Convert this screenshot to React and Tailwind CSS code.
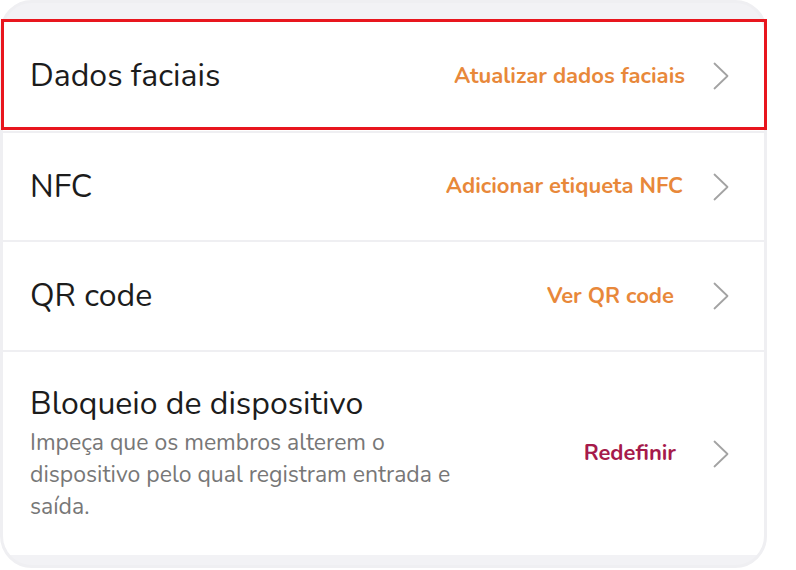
const font = { fontFamily: 'Nunito, Lato, "Noto Sans", sans-serif' }

function Chevron() {
    return (
        <svg width="16" height="28" viewBox="0 0 16 28" fill="none" className="shrink-0">
            <path d="M1.5 1.5 L14.5 14 L1.5 26.5" stroke="#a3a3a3" strokeWidth="1.8" strokeLinecap="round" strokeLinejoin="round" />
        </svg>
    )
}

function Row({ title, desc, action, actionColor, actionPad, height }) {
    return (
        <div className={`flex items-center bg-white pl-[27px] pr-[35px] ${height}`}>
            <div className="flex-1 min-w-0">
                <div className="text-[32px] leading-[40px] text-[#1c1c1c]">{title}</div>
                {desc && (
                    <div className="mt-[3px] max-w-[450px] text-[23px] leading-[32px] text-[#777777]">{desc}</div>
                )}
            </div>
            <div className={`flex items-center ${actionPad}`}>
                <span className={`text-[22px] font-bold ${actionColor}`}>{action}</span>
            </div>
            <div className="ml-[28px]">
                <Chevron />
            </div>
        </div>
    )
}

export default function App() {
    return (
        <div className="relative w-[796px] h-[570px] bg-white" style={font}>
            <div className="w-[767px] h-[568px] rounded-[32px] border-[3px] border-[#efeff2] overflow-hidden bg-[#f2f2f5] flex flex-col">
                <div className="h-[18px] shrink-0"></div>
                <div className="flex flex-col gap-[2px] bg-[#efeff2]">
                    <Row
                        title="Dados faciais"
                        action="Atualizar dados faciais"
                        actionColor="text-[#e8883a]"
                        actionPad="pr-0"
                        height="h-[110px]"
                    />
                    <Row
                        title="NFC"
                        action="Adicionar etiqueta NFC"
                        actionColor="text-[#e8883a]"
                        actionPad="pr-[2px]"
                        height="h-[107px]"
                    />
                    <Row
                        title="QR code"
                        action="Ver QR code"
                        actionColor="text-[#e8883a]"
                        actionPad="pr-[11px]"
                        height="h-[108px]"
                    />
                    <Row
                        title="Bloqueio de dispositivo"
                        desc="Impeça que os membros alterem o dispositivo pelo qual registram entrada e saída."
                        action="Redefinir"
                        actionColor="text-[#a61a4b]"
                        actionPad="pr-[9px]"
                        height="h-[203px]"
                    />
                </div>
            </div>
            {/* highlight box */}
            <div className="absolute left-[1px] top-[19px] w-[766px] h-[111px] border-[3px] border-[#e8161e]"></div>
        </div>
    )
}
